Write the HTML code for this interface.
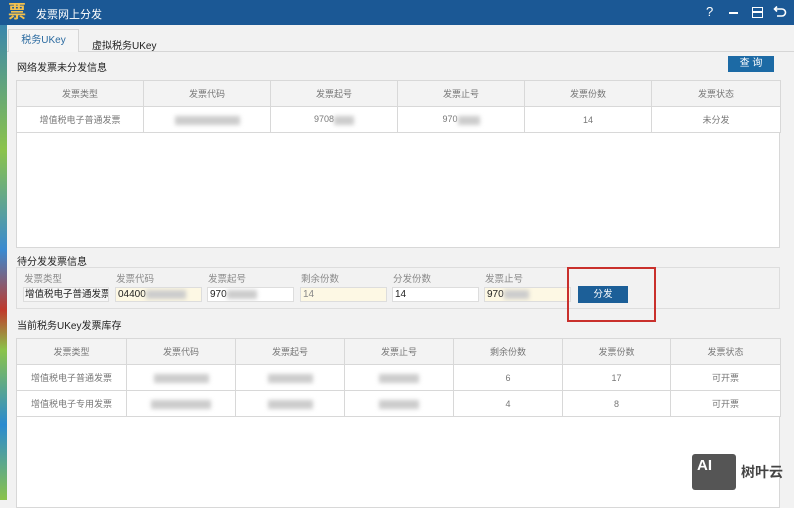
<!DOCTYPE html>
<html><head><meta charset="utf-8"><style>
*{box-sizing:border-box;margin:0;padding:0}
body{width:794px;height:500px;overflow:hidden;background:#f2f2f2;font-family:"Liberation Sans","Noto Sans CJK SC",sans-serif;position:relative;font-size:10px;color:#333}
.a{position:absolute;white-space:nowrap}
.title{left:0;top:0;width:794px;height:25px;background:#1b5895}
table{border-collapse:collapse;position:absolute;background:#fff;table-layout:fixed}
td{border:1px solid #d8d8d8;text-align:center;color:#777;font-size:9px;white-space:nowrap;overflow:hidden}
tr.h td{background:#f3f3f3}
.blur{display:inline-block;height:9px;background:#ccc;filter:blur(2px);vertical-align:middle}
.inp{position:absolute;top:287px;height:15px;border:1px solid #ddd;font-size:10px;padding-left:2px;line-height:13px;color:#222;white-space:nowrap;overflow:hidden}
.lab{position:absolute;top:271px;color:#888;font-size:9.5px;white-space:nowrap}
.ic{position:absolute;top:4px;color:#fff;font-size:13px;line-height:16px}
</style></head><body>
<div class="a" style="left:0;top:0;width:7px;height:500px;background:linear-gradient(#2a7ac0,#8bc34a 30%,#3a8ad0 50%,#c0392b 62%,#8bc34a 70%,#2a8ad0 85%,#8bc34a)"></div>
<div class="a title"></div>
<div class="a" style="left:8px;top:2px;width:20px;height:20px;color:#f2c14e;font-size:18px;font-weight:bold;line-height:20px">票</div>
<div class="a" style="left:36px;top:6px;color:#fff;font-size:11px">发票网上分发</div>
<div class="ic" style="left:706px">?</div>
<div class="a" style="left:729px;top:12px;width:9px;height:2px;background:#fff"></div>
<div class="a" style="left:752px;top:7px;width:11px;height:11px;border:1.5px solid #fff"></div>
<div class="a" style="left:752px;top:11px;width:11px;height:1.5px;background:#fff"></div>
<svg class="a" style="left:773px;top:6px" width="14" height="13" viewBox="0 0 14 13"><path d="M2 3 H9 A3.5 3.5 0 0 1 9 10 H4" fill="none" stroke="#fff" stroke-width="1.6"/><path d="M4 0.5 L1.5 3 L4 5.5" fill="none" stroke="#fff" stroke-width="1.6"/></svg>
<div class="a" style="left:7px;top:51px;width:787px;height:1px;background:#d6d6d6"></div>
<div class="a" style="left:8px;top:29px;width:71px;height:23px;background:#f5f5f5;border:1px solid #d6d6d6;border-bottom:none;color:#2a6aa0;font-size:10px;text-align:center;line-height:22px">税务UKey</div>
<div class="a" style="left:92px;top:37px;font-size:10px;color:#222">虚拟税务UKey</div>
<div class="a" style="left:17px;top:59px;font-size:10px;color:#222">网络发票未分发信息</div>
<div class="a" style="left:728px;top:56px;width:46px;height:16px;background:#1c6aa5;color:#fff;font-size:10px;text-align:center;line-height:16px">查 询</div>
<div class="a" style="left:16px;top:80px;width:764px;height:168px;background:#fff;border:1px solid #d8d8d8"></div>
<table style="left:16px;top:80px;width:764px">
<colgroup><col style="width:127px"><col style="width:127px"><col style="width:127px"><col style="width:127px"><col style="width:127px"><col style="width:129px"></colgroup>
<tr class="h" style="height:26px"><td>发票类型</td><td>发票代码</td><td>发票起号</td><td>发票止号</td><td>发票份数</td><td>发票状态</td></tr>
<tr style="height:26px"><td>增值税电子普通发票</td><td><span class="blur" style="width:65px"></span></td><td>9708<span class="blur" style="width:20px"></span></td><td>970<span class="blur" style="width:22px"></span></td><td>14</td><td>未分发</td></tr>
</table>
<div class="a" style="left:17px;top:253px;font-size:10px;color:#222">待分发发票信息</div>
<div class="a" style="left:16px;top:267px;width:764px;height:42px;border:1px solid #ddd"></div>
<div class="lab" style="left:24px">发票类型</div><div class="lab" style="left:116px">发票代码</div><div class="lab" style="left:208px">发票起号</div><div class="lab" style="left:301px">剩余份数</div><div class="lab" style="left:393px">分发份数</div><div class="lab" style="left:485px">发票止号</div>
<div class="inp" style="left:23px;width:86px;background:#f6f6f6;font-size:9.5px;padding-left:1px">增值税电子普通发票</div>
<div class="inp" style="left:115px;width:87px;background:#fdf8e4">04400<span class="blur" style="width:40px"></span></div>
<div class="inp" style="left:207px;width:87px;background:#fff">970<span class="blur" style="width:30px"></span></div>
<div class="inp" style="left:300px;width:87px;background:#fdf8e4;color:#888">14</div>
<div class="inp" style="left:392px;width:87px;background:#fff">14</div>
<div class="inp" style="left:484px;width:87px;background:#fdf8e4">970<span class="blur" style="width:25px"></span></div>
<div class="a" style="left:578px;top:286px;width:50px;height:17px;background:#1c5f98;color:#fff;font-size:9.5px;text-align:center;line-height:17px">分发</div>
<div class="a" style="left:567px;top:267px;width:89px;height:55px;border:2px solid #c9302c"></div>
<div class="a" style="left:17px;top:317px;font-size:10px;color:#222">当前税务UKey发票库存</div>
<div class="a" style="left:16px;top:338px;width:764px;height:170px;background:#fff;border:1px solid #d8d8d8"></div>
<table style="left:16px;top:338px;width:764px">
<colgroup><col style="width:110px"><col style="width:109px"><col style="width:109px"><col style="width:109px"><col style="width:109px"><col style="width:108px"><col style="width:110px"></colgroup>
<tr class="h" style="height:26px"><td>发票类型</td><td>发票代码</td><td>发票起号</td><td>发票止号</td><td>剩余份数</td><td>发票份数</td><td>发票状态</td></tr>
<tr style="height:26px"><td>增值税电子普通发票</td><td><span class="blur" style="width:55px"></span></td><td><span class="blur" style="width:45px"></span></td><td><span class="blur" style="width:40px"></span></td><td>6</td><td>17</td><td>可开票</td></tr>
<tr style="height:26px"><td>增值税电子专用发票</td><td><span class="blur" style="width:60px"></span></td><td><span class="blur" style="width:45px"></span></td><td><span class="blur" style="width:40px"></span></td><td>4</td><td>8</td><td>可开票</td></tr>
</table>
<div class="a" style="left:692px;top:454px;width:44px;height:36px;background:#555;border-radius:3px;color:#fff;font-weight:bold;font-size:15px;padding:3px 0 0 5px">AI</div>
<div class="a" style="left:741px;top:462px;color:#444;font-size:14px;font-weight:bold">树叶云</div>
</body></html>
